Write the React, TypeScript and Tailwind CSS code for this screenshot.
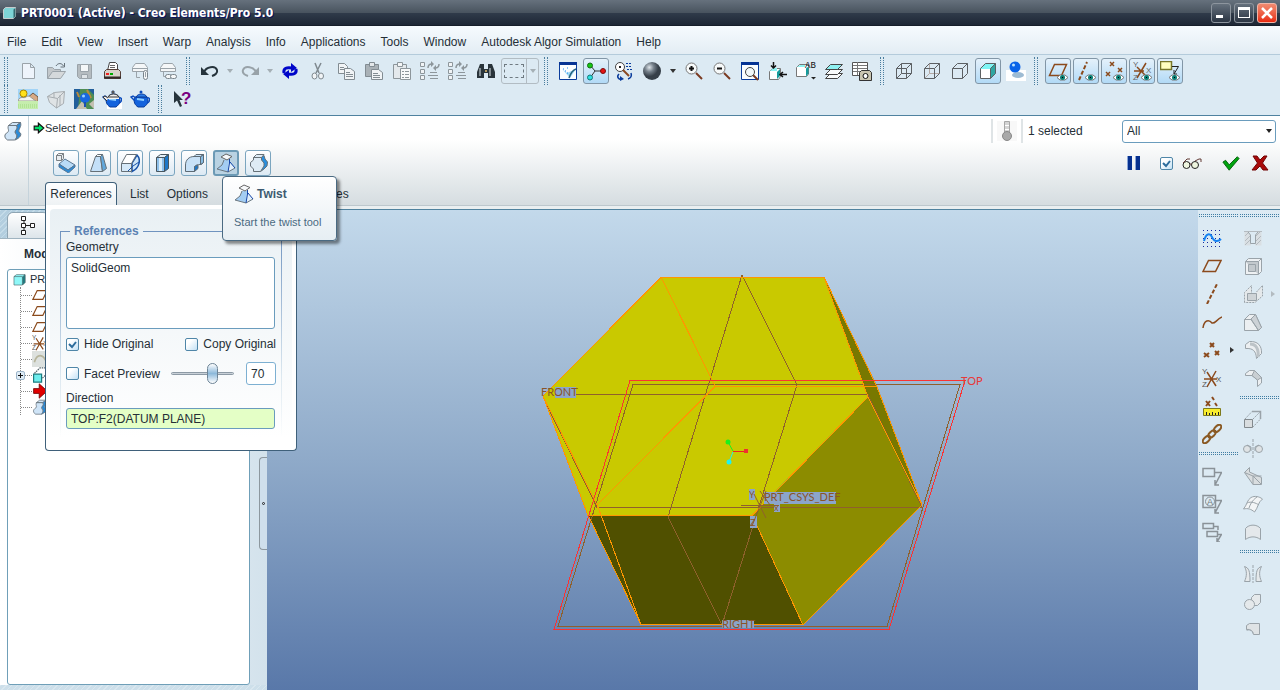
import { useState } from 'react';
import type { ReactNode } from 'react';

const EDGE = '#9aa3a9';
const DARK = '#5c6063';
const BROWN = '#8b4a1c';

const eye = (
    <g>
        <path d="M9 16.5L12 14H17L20 16.5L17 19H12Z" fill="#fff" stroke="#777" />
        <circle cx="14.5" cy="16.5" r="2.5" fill="#087f75" />
        <path d="M14 16h1v1h-1z" fill="#000" />
    </g>
);

const magnifier = (
    <g>
        <path d="M12 12L18 18" stroke="#7a3a20" strokeWidth="2" />
        <circle cx="7.5" cy="7.5" r="5.5" fill="#f7fafa" stroke="#777" />
    </g>
);

const teapot = (
    <g>
        <path d="M5 8C3 13 5 16 8 18H14C18 15 19 12 17 8Z" fill="#1463dd" stroke="#0a3c99" />
        <path d="M5 12L1 8L3 7L6 9M17 9C21 8 20 13 17 14" fill="none" stroke="#0a4bbd" strokeWidth="1.5" />
        <path d="M6 8C8 4 15 4 17 8Z" fill="#2d7eea" stroke="#0a3c99" />
        <circle cx="11" cy="3" r="1.5" fill="#0a4bbd" />
        <path d="M7 10L14 11" stroke="#8fd0ff" strokeWidth="2" />
    </g>
);

const icons: Record<string, ReactNode> = {
    newFile: <path d="M4.5 2.5H12.5L16.5 6.5V17.5H4.5ZM12.5 2.5V6.5H16.5" fill="#eef4fb" stroke={EDGE} />,
    open: (
        <g stroke={EDGE} fill="#c3c8cb">
            <path d="M1.5 17.5V6.5H6.5L8.5 8.5H14.5V11" />
            <path d="M1.5 17.5L6.5 10.5H19.5L14.5 17.5Z" fill="#d5d9db" />
            <path d="M10 5C12 1.5 16 2 17.5 5M18.5 2V6H14.5" fill="none" stroke="#68737b" />
        </g>
    ),
    save: (
        <g stroke={EDGE}>
            <path d="M3.5 3.5H17.5V17.5H5.5L3.5 15.5Z" fill="#b5bcc0" />
            <path d="M6.5 3.5H14.5V10.5H6.5Z" fill="#f4f7f8" />
            <path d="M7.5 13.5H13.5V17.5H7.5Z" fill="#dfe4e7" />
        </g>
    ),
    print: (
        <g>
            <path d="M5.5 9.5L7.5 1.5H13.5L15.5 3.5V9.5Z" fill="#fff" stroke="#444" />
            <path d="M8 4.5H13M8 6.5H13M8 8.5H13" stroke="#666" />
            <path d="M2.5 10.5L4.5 8.5H16.5L18.5 10.5V17.5H2.5Z" fill="#d9d2c8" stroke="#553f38" />
            <path d="M2 16.5H19" stroke="#352a28" strokeWidth="2" />
            <path d="M4 12h3v2h-3z" fill="#e22" />
            <path d="M8 12h3v2h-3z" fill="#0a0" />
        </g>
    ),
    mailFile: (
        <g stroke={EDGE} fill="#f5f7f8">
            <path d="M2.5 10.5V6.5L5.5 2.5H14.5L17.5 6.5V10.5Z" />
            <path d="M2 7.5H17M6.5 10.5V16.5H10" fill="none" />
            <rect x="13.5" y="9.5" width="4" height="9" rx="2" stroke="#78838a" />
            <path d="M15.5 11V16" />
        </g>
    ),
    mailLink: (
        <g stroke={EDGE} fill="#f5f7f8">
            <path d="M2.5 10.5V6.5L5.5 2.5H14.5L17.5 6.5V10.5Z" />
            <path d="M2 7.5H17M5.5 10.5V15.5H8" fill="none" />
            <rect x="7.5" y="13.5" width="6" height="4" rx="2" stroke="#78838a" />
            <rect x="12.5" y="13.5" width="6" height="4" rx="2" stroke="#78838a" />
        </g>
    ),
    undo: (
        <g fill="none" stroke="#26343c" strokeWidth="2">
            <path d="M4 11C6 6 15 4 17 9C18 12 15 14 12 15" />
            <path d="M1 6V14H9Z" fill="#26343c" stroke="none" />
        </g>
    ),
    redo: (
        <g fill="none" stroke="#98a2a8" strokeWidth="2">
            <path d="M16 11C14 6 5 4 3 9C2 12 5 14 8 15" />
            <path d="M19 6V14H11Z" fill="#98a2a8" stroke="none" />
        </g>
    ),
    regenerate: (
        <g fill="none" stroke="#0006c9" strokeWidth="3">
            <path d="M4 12C3 7 7 6 12 7M16 8C17 13 13 14 8 13" />
            <path d="M11 2L17 7L11 11ZM9 9L3 13L9 18Z" fill="#0006c9" stroke="none" />
        </g>
    ),
    cut: (
        <g fill="#f1f4f6" stroke="#7f898f">
            <path d="M7 2L11 12M13 2L8 12" strokeWidth="1.5" />
            <ellipse cx="6.5" cy="15" rx="2.5" ry="3" />
            <ellipse cx="13" cy="15" rx="2.5" ry="3" />
        </g>
    ),
    copy: (
        <g fill="#f1f4f6" stroke="#828c92">
            <path d="M2.5 2.5H8.5L11.5 5.5V12.5H2.5Z" />
            <path d="M4 6.5H8M4 8.5H8" />
            <path d="M8.5 7.5H14.5L18.5 10.5V18.5H8.5Z" />
            <path d="M10 11.5H14M10 13.5H17M10 15.5H17" />
        </g>
    ),
    paste: (
        <g stroke="#828c92">
            <path d="M1.5 3.5H14.5V15.5H1.5Z" fill="#a9b1b6" />
            <path d="M5.5 1.5H10.5V5.5H5.5Z" fill="#e4e8ea" />
            <path d="M7.5 8.5H14.5L18.5 11.5V18.5H7.5Z" fill="#f1f4f6" />
            <path d="M9 12.5H14M9 14.5H16M9 16.5H16" />
        </g>
    ),
    pasteSpecial: (
        <g stroke="#8d969b">
            <path d="M1.5 3.5H14.5V17.5H1.5Z" fill="#e4e9ec" />
            <path d="M5.5 1.5H10.5V5.5H5.5Z" fill="#f4f6f7" />
            <path d="M8.5 7.5H18.5V18.5H8.5Z" fill="#f7f9fa" />
            <path d="M10 10.5H12M10 13.5H12M10 16.5H12M13 10.5H17M13 13.5H17M13 16.5H17" />
        </g>
    ),
    tree: (
        <g stroke="#8d969b" fill="#f1f4f6">
            <path d="M0.5 1.5h4v4h-4zM0.5 8.5h4v4h-4zM0.5 14.5h4v4h-4z" />
            <path d="M8 7C8 4 9 3 12 3M15 7C18 7 19 6 19 3" fill="none" strokeWidth="1.5" />
            <path d="M11 0L14 3L11 6ZM16 4V10L13 7Z" fill="#8d969b" stroke="none" />
            <path d="M10 11.5H17M8 14.5H18M10 17.5H18" />
        </g>
    ),
    binoculars: (
        <g>
            <path d="M4 3H8V8H12V3H16L19 11V17H12V12H8V17H1V11Z" fill="#29343a" />
            <path d="M4 7V15M14 7V15" stroke="#dfe6ea" />
            <path d="M9 9h2v2h-2z" fill="#b59a60" />
        </g>
    ),
    repaint: (
        <g>
            <path d="M1.5 1.5H18.5V18.5H1.5Z" fill="#fbfdff" stroke="#0a3c9c" />
            <path d="M1 2.5H19" stroke="#063394" strokeWidth="3" />
            <path d="M4 8L12 17L18 8L9 12Z" fill="#9ed9f5" />
            <path d="M5 8H6M7 10H8M9 7H10M9 12H10" stroke="#1683f2" />
            <path d="M11 17C13 11 15 9 18 8" fill="none" stroke="#27607c" strokeWidth="1.5" />
        </g>
    ),
    spinCenter: (
        <g>
            <path d="M4 4L9 10H16M9 10L4 17" fill="none" stroke="#333" />
            <circle cx="4" cy="4.5" r="2.5" fill="#13c913" stroke="#176b17" />
            <circle cx="17" cy="10" r="2.5" fill="#e51515" stroke="#7d0e0e" />
            <circle cx="4" cy="16.5" r="2.5" fill="#2ae0e0" stroke="#157878" />
        </g>
    ),
    orientMode: (
        <g>
            <circle cx="6" cy="6" r="4.5" fill="#fff" stroke="#444" />
            <path d="M5 5h2v2h-2z" fill="#222" />
            <path d="M9 9L15 15" stroke="#8c4a22" strokeWidth="2" />
            <path d="M12 2.5H18M12 5.5H18M13 8.5H18" stroke="#0a3c9c" strokeDasharray="2 1" />
            <path d="M5 13C2 16 5 19 8 18M17 12C18 15 17 17 14 18" fill="none" stroke="#0a3c9c" strokeWidth="1.5" />
            <path d="M6 15L10 18L6 20Z" fill="#0a3c9c" />
        </g>
    ),
    sphere: (
        <g>
            <defs>
                <radialGradient id="ball" cx="0.35" cy="0.3">
                    <stop offset="0" stopColor="#dfe5ea" />
                    <stop offset="0.5" stopColor="#75808a" />
                    <stop offset="1" stopColor="#363f48" />
                </radialGradient>
            </defs>
            <circle cx="10" cy="10" r="9" fill="url(#ball)" />
        </g>
    ),
    zoomIn: <g>{magnifier}<path d="M5 7.5H10M7.5 5V10" stroke="#111" strokeWidth="2" /></g>,
    zoomOut: <g>{magnifier}<path d="M5 7.5H10" stroke="#111" strokeWidth="2" /></g>,
    refit: (
        <g>
            <path d="M1.5 1.5H18.5V18.5H1.5Z" fill="#fbfdff" stroke="#0a3c9c" />
            <path d="M1 2.5H19" stroke="#063394" strokeWidth="3" />
            <path d="M13 14L18 19" stroke="#7a3a20" strokeWidth="2" />
            <circle cx="10" cy="11" r="4.5" fill="#f3f8fa" stroke="#444" />
        </g>
    ),
    reorient: (
        <g>
            <path d="M1.5 10.5L4.5 7.5H12.5V15.5L10.5 18.5H1.5Z" fill="#fff" stroke="#777" />
            <path d="M2 10L5 7H9V10Z" fill="#8ef2f2" />
            <path d="M9 11L12 8V15L9 18Z" fill="#159c9c" />
            <path d="M5.5 1V7M3 4.5L5.5 7L8 4.5M19 13.5H12M15 11L12 13.5L15 16" fill="none" stroke="#111" strokeWidth="1.5" />
        </g>
    ),
    savedViews: (
        <g>
            <path d="M0.5 6.5L3.5 3.5H12.5V13L10.5 15.5H0.5Z" fill="#fff" stroke="#777" />
            <path d="M1 6L4 4H9V6Z" fill="#8ef2f2" />
            <path d="M10 7.5L12.5 5.5V12.5L10 15.5Z" fill="#159c9c" />
            <text x="9" y="7" fontSize="9" fill="#111" fontFamily="Liberation Mono, monospace">AB</text>
            <path d="M15 16H20L17.5 18.5Z" fill="#222" />
        </g>
    ),
    layers: (
        <g stroke="#444">
            <path d="M1.5 17.5L6.5 12.5H18.5L13.5 17.5Z" fill="#f8fafa" />
            <path d="M1.5 13.5L6.5 8.5H18.5L13.5 13.5Z" fill="#f8fafa" />
            <path d="M1.5 8.5L6.5 3.5H18.5L13.5 8.5Z" fill="#8ef0f0" />
        </g>
    ),
    viewManager: (
        <g>
            <path d="M0.5 1.5H15.5V14.5H0.5Z" fill="#fff" stroke="#555" />
            <path d="M1 4.5H15M1 7.5H15M1 10.5H15M5.5 1V14" stroke="#777" />
            <path d="M7.5 11.5L9.5 9.5H17.5L19.5 11.5V19.5H7.5Z" fill="#c9c4b0" stroke="#333" />
            <circle cx="13.5" cy="15" r="2.5" fill="#fff" stroke="#111" />
        </g>
    ),
    wireframe: (
        <g fill="none" stroke={DARK}>
            <path d="M2.5 7.5H12.5V17.5H2.5ZM7.5 2.5H17.5V12.5H7.5ZM2.5 7.5L7.5 2.5M12.5 7.5L17.5 2.5M12.5 17.5L17.5 12.5M2.5 17.5L7.5 12.5" />
        </g>
    ),
    hiddenLine: (
        <g fill="none" stroke="#b3a9a5">
            <path d="M7.5 2.5V12.5H17.5M2.5 17.5L7.5 12.5" />
            <path d="M2.5 7.5H12.5V17.5H2.5ZM2.5 7.5L7.5 2.5H17.5V12.5L12.5 17.5M12.5 7.5L17.5 2.5" stroke={DARK} />
        </g>
    ),
    noHidden: <path d="M2.5 7.5H12.5V17.5H2.5ZM2.5 7.5L7.5 2.5H17.5V12.5L12.5 17.5M12.5 7.5L17.5 2.5" fill="none" stroke={DARK} />,
    shading: (
        <g stroke={DARK}>
            <path d="M2.5 7.5H12.5V17.5H2.5Z" fill="#fff" stroke="#fff" />
            <path d="M2.5 7.5L7.5 2.5H17.5L12.5 7.5Z" fill="#7ff5f5" stroke="#7ff5f5" />
            <path d="M12.5 7.5L17.5 2.5V12.5L12.5 17.5Z" fill="#2fa6a2" />
            <path d="M2.5 7.5L7.5 2.5H17.5M2.5 7.5V17.5H12.5" fill="none" />
        </g>
    ),
    enhanced: (
        <g>
            <path d="M0 9H20V20H0Z" fill="#fff" />
            <ellipse cx="12" cy="14" rx="6" ry="3" fill="#9dbbd3" />
            <circle cx="9" cy="6" r="5.5" fill="#0a63e8" />
            <circle cx="7.5" cy="4" r="1.5" fill="#b9e2ff" />
        </g>
    ),
    planeDisplay: <g><path d="M1.5 14.5L6.5 3.5H18.5L13.5 14.5Z" fill="none" stroke={BROWN} strokeWidth="1.5" />{eye}</g>,
    axisDisplay: <g><path d="M3 19L11 1" stroke={BROWN} strokeWidth="2" strokeDasharray="4 2" />{eye}</g>,
    pointDisplay: <g><path d="M6 1L10 5M10 1L6 5M14 7L18 11M18 7L14 11M2 11L6 15M6 11L2 15" stroke={BROWN} strokeWidth="1.5" />{eye}</g>,
    csysDisplay: (
        <g>
            <path d="M2 10H12M5 17L14 2M5 6L13 14" stroke={BROWN} strokeWidth="1.5" />
            <g fill="#666" fontSize="8">
                <text x="1" y="6">Y</text>
                <text x="14" y="12">X</text>
                <text x="1" y="19">Z</text>
            </g>
            {eye}
        </g>
    ),
    noteDisplay: (
        <g>
            <path d="M0.5 0.5H11.5V8.5H0.5Z" fill="#ffffc0" stroke="#77772a" strokeWidth="1.5" />
            <path d="M12 5.5H18.5L14 13M14 9V13H17" fill="none" stroke="#222" />
            {eye}
        </g>
    ),
    landscape: (
        <g>
            <path d="M0 0H20V20H0Z" fill="#a2d4f7" />
            <path d="M8 10L15 4L20 8V14H8Z" fill="#d8a983" stroke="#6d5a49" />
            <path d="M0 12C2 6 6 10 8 8C11 5 14 10 18 12Z" fill="#f3f4ef" stroke="#9a9a90" />
            <circle cx="5.5" cy="4.5" r="3.5" fill="#ffe11a" stroke="#aa8500" />
            <path d="M0 12H20V20H0Z" fill="#c6edae" />
            <path d="M0 16H20M0 18H20" stroke="#9ddb7c" strokeDasharray="1 1" />
        </g>
    ),
    perspective: (
        <g stroke="#a7adb1">
            <path d="M1.5 7.5L8.5 3.5L18.5 2.5L17.5 14.5L10.5 19L3.5 13.5Z" fill="#dfe3e5" />
            <path d="M1.5 7.5L11.5 9.5L10.5 19M11.5 9.5L18.5 2.5M8 3V9M14 6V17" fill="none" />
        </g>
    ),
    photo: (
        <g>
            <path d="M0 0H20V20H0Z" fill="#4c8d55" />
            <path d="M0 0H6L4 20H0ZM14 0H20V6Z" fill="#225f9b" />
            <path d="M2 20L8 12L13 20ZM20 20V11L15 15Z" fill="#c3c0b1" />
            <path d="M13 1L17 9M3 3L5 8" stroke="#b98b3c" strokeWidth="2" />
            <circle cx="11" cy="9" r="5" fill="#1868e0" />
            <path d="M10 13H12V18H10Z" fill="#1c50b5" />
            <circle cx="9.5" cy="7" r="1.5" fill="#9ad0ff" />
        </g>
    ),
    teapotHalf: (
        <g>
            <path d="M5 12H20V20H5Z" fill="#fff" />
            {teapot}
            <path d="M5 7H17V10H5Z" fill="#f3f3f3" />
            <path d="M6 8C8 4 15 4 17 8Z" fill="#eee" stroke="#333" />
            <path d="M5 12L1 8L3 7L6 9" fill="#eee" stroke="#333" />
            <circle cx="11" cy="3" r="1.5" fill="#555" />
        </g>
    ),
    teapot,
    whatsThis: (
        <g>
            <path d="M2 2V14L5 11.5L8 18L10 17L7.5 11H11Z" fill="#26343c" />
            <text x="9" y="15" fontSize="17" fontWeight="bold" fill="#7a0080">?</text>
        </g>
    ),
    warp: (
        <g stroke="#6c7780">
            <path d="M5.5 4.5L9.5 1.5H17.5L13.5 4.5ZM5.5 4.5H13.5C16 9 11 9 12.5 12.5C15 15 13 19 11.5 19H4.5C1 17 1 13 4.5 11.5C7 9 4 8 5.5 4.5Z" fill="#cfe4f7" />
            <path d="M13.5 4.5L17.5 1.5C19 6 15 8 16 11C20 13 17 17 12 19C14 16 15 14 12.5 12C11 9 16 8 13.5 4.5Z" fill="#2a8bd9" />
        </g>
    ),
    transform: (
        <g stroke="#5a7793">
            <path d="M0.5 2.5L2.5 0.5H7.5V5.5L5.5 7.5H0.5Z" fill="#e9edf0" stroke="#7a8084" />
            <path d="M0.5 2.5H5.5V7.5M5.5 2.5L7.5 0.5" fill="none" stroke="#7a8084" />
            <path d="M3 11L9 6L19 12L12 17Z" fill="#b8dbf8" />
            <path d="M3 11L12 17L19 12V14L12.5 20L3 14Z" fill="#2a8bd9" />
        </g>
    ),
    taper: (
        <g stroke="#667077">
            <path d="M7.5 3.5L9.5 1.5H14.5L12.5 3.5Z" fill="#f8fafb" />
            <path d="M7.5 3.5H12.5L14.5 18.5H2.5Z" fill="#c4e0f8" />
            <path d="M12.5 3.5L14.5 1.5L18.5 15.5L14.5 18.5Z" fill="#62a8dc" />
        </g>
    ),
    stretch: (
        <g stroke="#667077">
            <path d="M12 10L17 2C21 6 20 15 12 18.5Z" fill="#cfe6f8" stroke="#1852a8" strokeWidth="1.5" />
            <path d="M1.5 10.5L6.5 1.5H16.5L11.5 10.5Z" fill="#fff" />
            <path d="M1.5 10.5H11.5V18.5H1.5Z" fill="#d6e9f8" />
            <path d="M8 18L13 13L19 9" fill="none" stroke="#1852a8" />
        </g>
    ),
    bendBox: (
        <g stroke="#48565f">
            <path d="M4.5 4.5L8.5 1.5H16.5L12.5 4.5Z" fill="#e5f0f8" />
            <path d="M4.5 4.5H12.5V18.5H4.5Z" fill="#8fc0ea" />
            <path d="M12.5 4.5L16.5 1.5V15.5L12.5 18.5Z" fill="#1d77c8" />
            <path d="M8.5 5V18" stroke="#d8edfb" strokeWidth="3" />
        </g>
    ),
    bend: (
        <g stroke="#5d6b75">
            <path d="M1.5 18.5V12C1.5 7 5 3.5 10 3.5L12 1.5H19.5V9.5L17.5 11.5C13 11.5 11.5 12 10.5 14V18.5Z" fill="#c7e1f7" />
            <path d="M10 3.5H16.5V11.5M16.5 3.5L19.5 1.5" fill="none" />
            <path d="M16.5 4L19.5 1.5V9.5L16.5 11.5Z" fill="#86bbe3" />
            <path d="M10.5 18.5V13.5L14 12V15.5Z" fill="#1d77c8" />
        </g>
    ),
    twist: (
        <g>
            <path d="M1 16L6 12L8 7H13L15 11L19 15L12 19Z" fill="#a3cdf3" />
            <path d="M13 8L15 11L19 15L12 19Z" fill="#e3f0fa" />
            <path d="M8 7L6 12L1 16L12 19L19 15" fill="none" stroke="#6b7780" />
            <path d="M13.5 6V10L12 19M14 9L19 15" fill="none" stroke="#1445a8" />
            <path d="M5 4L10 1L16 3.5L11 7Z" fill="#f6f8fa" stroke="#666" />
        </g>
    ),
    sculpt: (
        <g stroke="#667077">
            <path d="M13 4.5L16 2.5L17 6L19.5 9L19 13L16 16L12.5 18.5L15 12Z" fill="#278fe0" />
            <path d="M5.5 4.5L8.5 1.5H16L13.5 4.5ZM5.5 4.5H13.5V7L16 10V13L12.5 18.5H5.5V16L2.5 13V9.5L5.5 7Z" fill="#deebf5" />
        </g>
    ),
    glasses: (
        <g fill="#eef5df" stroke="#222">
            <circle cx="4.5" cy="12" r="3.5" />
            <circle cx="13" cy="12" r="3.5" />
            <path d="M1 10L5 6H8M13 8L17 6H19V9M8 11H10" fill="none" stroke="#633a34" />
        </g>
    ),
    ok: <path d="M1 9L4 7L8 12L17 3L19 5L8 18Z" fill="#00a50f" stroke="#04590b" />,
    cancel: <path d="M3 3H7L10 7L14 3H17L12.5 10L18 17H13L10 13L6 17H2L7.5 10Z" fill="#a90a0a" stroke="#710505" />,
    thermo: (
        <g>
            <path d="M0 0H20V20H0Z" fill="#f8f8f8" />
            <path d="M7.5 0.5H12.5V12H7.5Z" fill="#d4d4d4" stroke="#a6a6a6" />
            <path d="M8 4.5H12M8 8.5H12" stroke="#fff" />
            <circle cx="10" cy="15" r="4.5" fill="#a9a9a9" stroke="#888" />
        </g>
    ),
    sketch: (
        <g>
            <path d="M1 2.5H19M1 6.5H19M1 10.5H19M1 14.5H19M1 18.5H19" stroke="#172a9e" strokeDasharray="1 3" />
            <path d="M2 13C4 5 8 5 10 9C12 14 16 14 19 11" fill="none" stroke="#1683f2" strokeWidth="2" />
        </g>
    ),
    plane: <path d="M1 15.5L6.5 4.5H19L13.5 15.5Z" fill="none" stroke={BROWN} strokeWidth="1.5" />,
    axis: <path d="M5 20L15 0" stroke={BROWN} strokeWidth="2" strokeDasharray="4 2" />,
    curve: <path d="M1 16C2 8 7 7 10 11C13 12 14 8 20 5" fill="none" stroke={BROWN} strokeWidth="1.5" />,
    points: <path d="M8 3L12 7M12 3L8 7M13 11L17 15M17 11L13 15M2 13L7 17M7 13L2 17" stroke={BROWN} strokeWidth="2" />,
    csys: (
        <g>
            <path d="M2 11H15M5 19L14 3M5 4L14 18" stroke={BROWN} strokeWidth="1.5" />
            <g fill="#555" fontSize="8">
                <text x="0" y="6">Y</text>
                <text x="14" y="14">X</text>
                <text x="0" y="19">Z</text>
            </g>
        </g>
    ),
    analysisFeature: (
        <g>
            <path d="M10 1L12 4M4 5L8 10M8 5L4 10M13 7L15 10" stroke={BROWN} strokeWidth="2" />
            <path d="M1.5 12.5H18.5V19.5H1.5Z" fill="#f7ec2e" stroke="#7d7a1d" />
            <path d="M4.5 19V16M7.5 19V17M10.5 19V16M13.5 19V17M16.5 19V16" stroke="#222" />
        </g>
    ),
    chain: (
        <g fill="none" stroke="#8a5a24" strokeWidth="2">
            <ellipse cx="4.5" cy="15.5" rx="4.5" ry="2.5" transform="rotate(-45 4.5 15.5)" />
            <ellipse cx="10" cy="10" rx="4.5" ry="2.5" transform="rotate(-45 10 10)" />
            <ellipse cx="15.5" cy="4.5" rx="4.5" ry="2.5" transform="rotate(-45 15.5 4.5)" />
        </g>
    ),
    note: <path d="M1 2.5H12.5V10.5H1ZM13 6.5H19.5L13 19M13 14V19H17" fill="none" stroke="#8a9298" strokeWidth="1.5" />,
    symbol: (
        <g fill="none" stroke="#8a9298">
            <path d="M1 1.5H13.5V13.5H1ZM14 6.5H19.5L13 19M13 15V19H17" strokeWidth="1.5" />
            <circle cx="8" cy="7.5" r="4.5" />
            <text x="5" y="11" fontSize="9" fill="#727b80" stroke="none">A</text>
        </g>
    ),
    notes: <path d="M1 1.5H11.5V6.5H1ZM5 9.5H15.5V14.5H5ZM12 4.5H16V8M16 12.5H19.5L15 20M15 16V20H18" fill="none" stroke="#8a9298" strokeWidth="1.5" />,
    hole: (
        <g stroke="#b4bbc0">
            <path d="M1.5 3.5H5L8 7.5V17.5H1.5ZM18.5 3.5H15L12 7.5V17.5H18.5Z" fill="#d9dfe3" stroke="none" />
            <path d="M1 3.5H19M2 8L6 4M2 13L7 8M2 17L7 12M13 8L17 4M13 13L18 8M13 17L18 12" fill="none" />
            <path d="M5 4L7.5 7V15.5H12.5V7L15 4" fill="none" stroke={EDGE} />
        </g>
    ),
    shell: (
        <g stroke={EDGE}>
            <path d="M2.5 5.5L5.5 2.5H18.5V15.5L15.5 18.5H2.5Z" fill="#eef1f3" />
            <path d="M2.5 5.5H15.5V18.5M15.5 5.5L18.5 2.5M5.5 8.5H12.5V15.5H5.5Z" fill="#c3c9cd" />
        </g>
    ),
    rib: (
        <g stroke={EDGE} fill="#e5e9eb">
            <path d="M1.5 18.5V8.5L8.5 1.5V9.5M13.5 8L19.5 1.5V12L12 18.5H1.5" strokeDasharray="2 1" />
            <path d="M4.5 9.5H13.5V16.5H4.5Z" fill="#cfd4d7" />
        </g>
    ),
    draft: (
        <g stroke={EDGE} fill="#eceff1">
            <path d="M1.5 7.5L6.5 2.5H12.5L18.5 15.5L15.5 18.5H1.5Z" />
            <path d="M8 7L12.5 2.5L18.5 15.5L15.5 18.5Z" fill="#cdd2d6" />
            <path d="M1.5 7.5H8L15.5 18.5" fill="none" />
        </g>
    ),
    round: (
        <g stroke={EDGE} fill="#eceff1">
            <path d="M2.5 4.5L6.5 1.5C15 1 19 6 18.5 13.5L13.5 18.5C13 11 10 8 2.5 8.5Z" />
            <path d="M7 4C13 4 16 9 15 17" fill="none" stroke="#bcc3c7" strokeWidth="3" />
        </g>
    ),
    chamfer: (
        <g stroke={EDGE} fill="#eceff1">
            <path d="M2.5 5.5L6.5 2.5H11.5L18.5 9.5V15L14.5 18.5V12L9 7.5H2.5Z" />
            <path d="M9 7.5L11.5 2.5L18.5 9.5L14.5 12Z" fill="#c9cfd3" />
        </g>
    ),
    extrude: (
        <g stroke={EDGE} fill="#d9dddf">
            <path d="M1.5 9.5H9.5V17.5H1.5Z" stroke="#82898d" />
            <path d="M2 9L9 1.5H17.5V9L10 17M10 9L17 2" fill="none" strokeDasharray="2 1" />
            <path d="M9 1.5H17.5V9" fill="none" strokeWidth="1.5" />
        </g>
    ),
    revolve: (
        <g stroke={EDGE} fill="#dfe3e5">
            <circle cx="4" cy="11" r="3.5" />
            <circle cx="16" cy="11" r="3.5" />
            <path d="M10 1V20" strokeDasharray="3 1" />
            <path d="M4 7L8 9V13M16 7L12 9V13" fill="none" />
        </g>
    ),
    sweep: (
        <g stroke={EDGE} fill="#d9dddf">
            <path d="M1.5 6.5L6.5 1.5V6L18.5 11.5V18.5H10L1.5 6.5Z" />
            <path d="M10 10H18.5M10 10V18.5M1.5 6.5L10 10L18 18" fill="none" />
        </g>
    ),
    boundary: (
        <g stroke={EDGE} fill="#f3f5f6">
            <path d="M0.5 15C4 11 4 6 8 3.5C12 1.5 16 2.5 19.5 5C15 8 15 14 11.5 18C8 15 5 14 0.5 15Z" />
            <path d="M4 9C8 7 13 9 16 11M6 14C8 8 11 5 14 3" fill="none" />
        </g>
    ),
    style: <path d="M2.5 17.5V6.5C6 2 14 2 17.5 6.5V17.5C13 14 7 14 2.5 17.5Z" fill="#e4e8eb" stroke={EDGE} />,
    mirror: (
        <g stroke={EDGE} fill="#e5e9eb">
            <path d="M10 1V19" strokeDasharray="3 1" />
            <path d="M1.5 2.5C6 4 7 7 7 17.5H1.5C4 12 4 7 1.5 2.5ZM18.5 2.5C14 4 13 7 13 17.5H18.5C16 12 16 7 18.5 2.5Z" />
        </g>
    ),
    merge: (
        <g stroke={EDGE} fill="#e5e9eb">
            <path d="M8.5 5.5L11.5 2.5H17.5V10.5L14.5 13.5H8.5Z" />
            <circle cx="6.5" cy="12.5" r="5" />
        </g>
    ),
    trim: (
        <g stroke={EDGE} fill="#dfe3e5">
            <path d="M3.5 5.5L6.5 3.5H16.5V14.5H10.5C10 11 8 9 3.5 9.5Z" />
            <path d="M3.5 10C8 10 9.5 11 10 14.5" fill="none" strokeDasharray="2 1" />
        </g>
    ),
    part: (
        <g stroke="#4b6b70">
            <path d="M1.5 5.5L5.5 2.5H18.5V14.5L14.5 18.5H1.5Z" fill="#8ff7f7" />
            <path d="M14.5 6L18.5 2.5V14.5L14.5 18.5Z" fill="#1d7c80" />
            <path d="M1.5 5.5H14.5" fill="none" />
        </g>
    ),
    spline: (
        <g>
            <path d="M0 0H20V20H0Z" fill="#dde1de" />
            <path d="M3 14C6 3 14 3 18 14" fill="none" stroke="#b7b59c" strokeWidth="2" />
        </g>
    ),
    protrusion: (
        <g>
            <path d="M2 9H12V19H2Z" fill="#6eeded" stroke="#1d7c80" strokeWidth="1.5" />
            <path d="M3 8L10 1H19M13 14L19 8" fill="none" stroke="#56656b" strokeDasharray="2 1" strokeWidth="1.5" />
        </g>
    ),
    insertHere: <path d="M2 7H9V1L19 10L9 19V13H2Z" fill="#e10000" stroke="#6c0000" />,
    goArrow: <path d="M2 7H9V2L18 10L9 18V13H2Z" fill="#00e06a" stroke="#111" strokeWidth="2" />,
};

interface IconProps {
    name: string;
    className?: string;
}

const Icon = ({ name, className = 'size-5' }: IconProps) => (
    <svg viewBox="0 0 20 20" className={`shrink-0 ${className}`} aria-hidden="true">{icons[name]}</svg>
);

const ToolButton = ({ name, pressed }: { name: string; pressed?: boolean }) => (
    <button type="button" aria-label={name} aria-pressed={pressed} className="flex size-7 shrink-0 items-center justify-center">
        <span className={pressed
            ? 'flex size-[26px] items-center justify-center rounded-[3px] border border-[#8296a6] bg-linear-to-b from-[#e4f1fb] to-[#b2daf6]'
            : 'flex size-[26px] items-center justify-center'}>
            <Icon name={name} />
        </span>
    </button>
);

const Arrow = ({ className = '' }: { className?: string }) => (
    <svg viewBox="0 0 6 4" className={`h-1 w-1.5 shrink-0 ${className}`} aria-hidden="true">
        <path d="M0 0H6L3 4Z" fill="currentColor" />
    </svg>
);

const Grip = () => <span className="mr-1.5 ml-1 h-7 w-1 shrink-0 border-x border-dotted border-[#4a7d9e]" />;

const RowGrip = () => <span className="mx-px mt-1 mb-[7px] h-[3px] border-y border-dotted border-[#3f7da3]" />;

const CheckBox = ({ label, initial, hideLabel }: { label: string; initial?: boolean; hideLabel?: boolean }) => {
    const [checked, setChecked] = useState(Boolean(initial));

    return (
        <label className="flex items-center gap-[5px]">
            <span className="grid size-[13px] shrink-0">
                <input
                    type="checkbox"
                    checked={checked}
                    aria-label={label}
                    onChange={(e) => setChecked(e.target.checked)}
                    className="col-start-1 row-start-1 size-[13px] appearance-none rounded-xs border border-[#4f86a8] bg-linear-to-br from-white from-30% to-[#c3e1f5]"
                />
                {checked && (
                    <svg viewBox="0 0 13 13" className="pointer-events-none col-start-1 row-start-1 size-[13px]">
                        <path d="M3 6L6 9L10 4" fill="none" stroke="#2c6c9c" strokeWidth="2" />
                    </svg>
                )}
            </span>
            {!hideLabel && <span>{label}</span>}
        </label>
    );
};

const menus = ['File', 'Edit', 'View', 'Insert', 'Warp', 'Analysis', 'Info', 'Applications', 'Tools', 'Window', 'Autodesk Algor Simulation', 'Help'];

const TitleBar = () => (
    <header className="flex h-[26px] items-center border-b border-[#161e2a] bg-[linear-gradient(#66717d,#49545f_50%,#303b4a_52%,#1e2735)] px-[3px]">
        <svg viewBox="0 0 13 12" className="h-3 w-[13px]">
            <path d="M0.5 2.5L2.5 0.5H12.5V9L10.5 11.5H0.5Z" fill="#7dd3d6" stroke="#c5cbcd" />
            <path d="M10.5 2.5V11.5L12.5 9V1Z" fill="#33676e" />
        </svg>
        <h1 className="ml-[5px] flex-1 font-['DejaVu_Sans_Condensed','DejaVu_Sans',sans-serif] text-xs font-bold text-white [text-shadow:1px_1px_0_#0a1260]">
            PRT0001 (Active) - Creo Elements/Pro 5.0
        </h1>
        <div className="flex gap-[3px]">
            <button type="button" aria-label="Minimize" className="flex size-5 items-end justify-center rounded-[3px] border border-[#8d959e] bg-linear-to-b from-[#66717d] to-[#2c3644] pb-1">
                <span className="mr-1 h-[3px] w-[7px] bg-white" />
            </button>
            <button type="button" aria-label="Maximize" className="flex size-5 items-center justify-center rounded-[3px] border border-[#8d959e] bg-linear-to-b from-[#66717d] to-[#2c3644]">
                <span className="h-[11px] w-3 border border-t-3 border-white" />
            </button>
            <button type="button" aria-label="Close" className="flex size-5 items-center justify-center rounded-[3px] border border-[#f0b5a8] bg-linear-to-b from-[#f08a70] to-[#e8260a]">
                <svg viewBox="0 0 12 12" className="size-3"><path d="M1 1L11 11M11 1L1 11" stroke="#fff" strokeWidth="2.5" /></svg>
            </button>
        </div>
    </header>
);

const Toolbars = () => (
    <div className="border-b border-[#4f829f] bg-[#dceaf3] py-0.5">
        <div className="flex h-7 items-center">
            <Grip />
            {['newFile', 'open', 'save', 'print', 'mailFile', 'mailLink'].map((n) => <ToolButton key={n} name={n} />)}
            <Grip />
            <ToolButton name="undo" />
            <span className="flex w-3 justify-center text-[#a5afb5]"><Arrow /></span>
            <ToolButton name="redo" />
            <span className="flex w-3 justify-center text-[#a5afb5]"><Arrow /></span>
            {['regenerate', 'cut', 'copy', 'paste', 'pasteSpecial', 'tree', 'tree', 'binoculars'].map((n, i) => <ToolButton key={i} name={n} />)}
            <button type="button" aria-label="Select box" className="mx-px flex h-[26px] w-[38px] shrink-0 rounded-[3px] border border-[#b2bcc3] text-[#a5afb5]">
                <span className="flex w-[25px] items-center justify-center self-stretch border-r border-[#b2bcc3]">
                    <span className="h-3.5 w-5 border border-dashed border-[#6f7a81]" />
                </span>
                <span className="flex flex-1 items-center justify-center self-stretch"><Arrow /></span>
            </button>
            <Grip />
            <ToolButton name="repaint" />
            <ToolButton name="spinCenter" pressed />
            <ToolButton name="orientMode" />
            <ToolButton name="sphere" />
            <span className="flex w-3.5 justify-center text-[#333]"><Arrow /></span>
            {['zoomIn', 'zoomOut', 'refit', 'reorient', 'savedViews', 'layers', 'viewManager'].map((n) => <ToolButton key={n} name={n} />)}
            <Grip />
            {['wireframe', 'hiddenLine', 'noHidden'].map((n) => <ToolButton key={n} name={n} />)}
            <ToolButton name="shading" pressed />
            <ToolButton name="enhanced" />
            <Grip />
            {['planeDisplay', 'axisDisplay', 'pointDisplay', 'csysDisplay', 'noteDisplay'].map((n) => <ToolButton key={n} name={n} pressed />)}
        </div>
        <div className="flex h-7 items-center">
            <Grip />
            {['landscape', 'perspective', 'photo', 'teapotHalf', 'teapot'].map((n) => <ToolButton key={n} name={n} />)}
            <Grip />
            <ToolButton name="whatsThis" />
        </div>
    </div>
);

const Tooltip = () => (
    <div role="tooltip" className="absolute top-full left-[9px] z-30 h-[65px] w-[115px] rounded-sm border border-[#4a6a82] bg-linear-to-b from-white to-[#e6eef3] px-[11px] pt-[7px] shadow-[3px_3px_3px_rgba(0,0,0,0.45)]">
        <div className="flex items-center gap-[3px] text-xs font-bold text-[#3d5a70]">
            <Icon name="twist" />
            Twist
        </div>
        <p className="mt-2.5 text-[11px] leading-4 whitespace-nowrap text-[#4a6a82]">Start the twist tool</p>
    </div>
);

const ReferencesPanel = () => {
    const [preview, setPreview] = useState(70);

    return (
        <div className="absolute top-full left-0 z-20 w-[252px] rounded-b-sm border border-t-0 border-[#3f607a] bg-white px-1 pt-1 pb-3">
            <div className="rounded-t-sm bg-linear-to-b from-[#e9f0f4] to-white px-2.5 pt-[14px]">
                <fieldset className="h-[215px] border border-[#6f93bf] px-[5px] [border-image:linear-gradient(to_bottom,#6f93bf,#dce8f0_70%,transparent)_1]">
                    <legend className="ml-1 px-1 text-xs leading-4 font-bold text-[#5b82b3]">References</legend>
                    <label htmlFor="geometry" className="block leading-4">Geometry</label>
                    <textarea
                        id="geometry"
                        readOnly
                        defaultValue="SolidGeom"
                        className="mt-0.5 block h-[72px] w-[209px] resize-none rounded-[3px] border border-[#6a9cbd] bg-white px-1 py-0.5 leading-4"
                    />
                    <div className="mt-[7px] flex h-4 items-center justify-between">
                        <CheckBox label="Hide Original" initial />
                        <CheckBox label="Copy Original" />
                    </div>
                    <div className="mt-2.5 flex h-[23px] items-center">
                        <CheckBox label="Facet Preview" />
                        <input
                            type="range"
                            aria-label="Preview quality"
                            value={preview}
                            onChange={(e) => setPreview(Number(e.target.value))}
                            className="mr-3 ml-auto h-[21px] w-[63px] appearance-none bg-transparent [&::-webkit-slider-runnable-track]:h-[3px] [&::-webkit-slider-runnable-track]:rounded-full [&::-webkit-slider-runnable-track]:border [&::-webkit-slider-runnable-track]:border-[#8d9aa5] [&::-webkit-slider-runnable-track]:bg-[#c9d1d8] [&::-webkit-slider-thumb]:-mt-[10px] [&::-webkit-slider-thumb]:h-[21px] [&::-webkit-slider-thumb]:w-[11px] [&::-webkit-slider-thumb]:appearance-none [&::-webkit-slider-thumb]:rounded-full [&::-webkit-slider-thumb]:border [&::-webkit-slider-thumb]:border-[#6d8496] [&::-webkit-slider-thumb]:bg-linear-to-b [&::-webkit-slider-thumb]:from-white [&::-webkit-slider-thumb]:via-[#8db9da] [&::-webkit-slider-thumb]:to-white"
                        />
                        <input
                            aria-label="Preview value"
                            value={preview}
                            onChange={(e) => setPreview(Number(e.target.value) || 0)}
                            className="h-[23px] w-[30px] rounded-[3px] border border-[#7db0d2] bg-white px-1"
                        />
                    </div>
                    <label htmlFor="direction" className="mt-[5px] block leading-4">Direction</label>
                    <input
                        id="direction"
                        readOnly
                        value="TOP:F2(DATUM PLANE)"
                        className="mt-0.5 block h-[21px] w-[209px] rounded-[3px] border border-[#6a9cbd] bg-[#e4ffc6] px-1"
                    />
                </fieldset>
            </div>
        </div>
    );
};

const Dashboard = () => (
    <section className="relative z-10 bg-linear-to-b from-white from-25% to-[#d2dade]">
        <div className="flex h-[89px]">
            <div className="flex w-[29px] shrink-0 justify-center border-r border-[#c5d3db] pt-[5px] pr-0.5">
                <Icon name="warp" />
            </div>
            <div className="flex flex-1 flex-col">
                <div className="flex h-6 items-center pl-1 text-[11px]">
                    <Icon name="goArrow" className="size-3" />
                    Select Deformation Tool
                </div>
                <div className="mt-2.5 flex gap-1.5 pl-6">
                    {['transform', 'taper', 'stretch', 'bendBox', 'bend', 'twist', 'sculpt'].map((n) => (
                        <div key={n} className="relative">
                            <button
                                type="button"
                                aria-label={n}
                                className={n === 'twist'
                                    ? 'flex size-[26px] items-center justify-center rounded-[3px] border-2 border-[#6c9ab5] bg-[#b9d2e2]'
                                    : 'flex size-[26px] items-center justify-center rounded-[3px] border border-[#7ba5bf] bg-linear-to-b from-white to-[#dce9f3]'}
                            >
                                <Icon name={n} />
                            </button>
                            {n === 'twist' && <Tooltip />}
                        </div>
                    ))}
                </div>
                <div className="relative mt-auto ml-4 flex h-[23px] items-center">
                    <button type="button" className="relative z-30 h-full w-[72px] rounded-t-sm border border-b-0 border-[#3f607a] bg-linear-to-b from-white to-[#eef2f4]">References</button>
                    <div className="ml-[13px] flex gap-[18px]">
                        <button type="button">List</button>
                        <button type="button">Options</button>
                        <button type="button" aria-label="Marquee" className="w-[50px]" />
                        <button type="button">Properties</button>
                    </div>
                    <ReferencesPanel />
                </div>
            </div>
            <div className="flex w-[289px] shrink-0 flex-col">
                <div className="flex items-center pt-[3px] pr-1">
                    <span className="flex h-6 w-8 items-center justify-center border-x-2 border-[#dfe4e6]"><Icon name="thermo" /></span>
                    <span className="ml-[5px] flex-1">1 selected</span>
                    <div className="relative">
                        <select aria-label="Selection filter" className="block h-[23px] w-[154px] appearance-none rounded-[3px] border border-[#6a9cbd] bg-white px-1">
                            <option>All</option>
                        </select>
                        <span className="pointer-events-none absolute top-0 right-1 flex h-full items-center"><Arrow className="text-[#222]" /></span>
                    </div>
                </div>
                <div className="mt-2.5 flex h-5 items-center justify-end pr-2.5">
                    <button type="button" aria-label="Pause" className="mr-5 flex gap-[3px]">
                        <span className="h-3.5 w-[5px] border-l border-[#89a5d8] bg-[#06308f]" />
                        <span className="h-3.5 w-[5px] border-l border-[#89a5d8] bg-[#06308f]" />
                    </button>
                    <CheckBox label="Preview" initial hideLabel />
                    <button type="button" aria-label="Glasses" className="ml-[9px]"><Icon name="glasses" /></button>
                    <button type="button" aria-label="Apply" className="ml-5"><Icon name="ok" className="size-[18px]" /></button>
                    <button type="button" aria-label="Cancel" className="ml-2.5"><Icon name="cancel" /></button>
                </div>
            </div>
        </div>
        <div className="h-[5px] border-t border-b border-t-[#bcc7cd] border-b-[#4f829f] bg-[#e9eef0]" />
    </section>
);

const treeItems = [
    { icon: 'plane', label: 'RIGHT' },
    { icon: 'plane', label: 'TOP' },
    { icon: 'plane', label: 'FRONT' },
    { icon: 'csys', label: 'PRT_CSYS_DEF' },
    { icon: 'spline', label: 'Sketch 1' },
    { icon: 'protrusion', label: 'Extrude 1', expandable: true },
    { icon: 'insertHere', label: 'Insert Here' },
    { icon: 'warp', label: 'Warp 1' },
];

const ModelTree = () => (
    <aside className="flex w-[267px] shrink-0 bg-[repeating-linear-gradient(135deg,#d9e7ef_0_1px,#cddfea_1px_4px)]">
        <div className="flex flex-1 flex-col pb-[5px]">
            <div className="flex h-[29px] items-end border-b border-[#9fb3c0] bg-[repeating-linear-gradient(135deg,#c4dbe8_0_1px,#b3cedf_1px_4px)] pl-[7px]">
                <button type="button" aria-label="Model Tree" className="flex h-[26px] w-[42px] items-center justify-center rounded-t-md border border-b-0 border-[#8fa5b3] bg-linear-to-b from-white to-[#dde5ea]">
                    <svg viewBox="0 0 14 19" className="h-[19px] w-3.5" fill="#fff" stroke="#222">
                        <path d="M3 2V17M3 9.5H12" />
                        <path d="M0.5 0.5h4v4h-4zM0.5 7.5h4v4h-4zM0.5 14.5h4v4h-4zM9.5 7.5h4v4h-4z" />
                    </svg>
                </button>
            </div>
            <div className="flex flex-1 flex-col bg-linear-to-r from-white to-[#d3e2ec] pl-[7px]">
                <h2 className="flex h-[30px] items-center pl-[17px] text-xs font-bold">Model Tree</h2>
                <div className="mr-[17px] flex-1 rounded-[3px] border border-[#6f9fb8] bg-white pt-px pl-[5px] text-[11px] leading-4">
                    <div className="flex h-4 items-center gap-1"><Icon name="part" className="size-[13px]" />PRT0001.PRT</div>
                    <ul className="ml-[7px] border-l border-dotted border-[#888]">
                        {treeItems.map((item) => (
                            <li key={item.label} aria-label={item.label} className="flex h-4 items-center">
                                {item.expandable ? (
                                    <span className="-ml-[5px] flex w-4 items-center">
                                        <span className="flex size-[9px] items-center justify-center rounded-xs border border-[#9db5c9] bg-[#dfecf6]">
                                            <svg viewBox="0 0 5 5" className="size-[5px]"><path d="M0 2.5H5M2.5 0V5" stroke="#111" /></svg>
                                        </span>
                                        <span className="flex-1 border-t border-dotted border-[#888]" />
                                    </span>
                                ) : (
                                    <span className="w-[11px] border-t border-dotted border-[#888]" />
                                )}
                                <Icon name={item.icon} className="size-4" />
                            </li>
                        ))}
                    </ul>
                </div>
            </div>
        </div>
        <button type="button" aria-label="Collapse" className="mt-[247px] -ml-2 flex h-[93px] w-2 items-center justify-center rounded-l-sm border border-r-0 border-[#8d989f] bg-[#cfdfec]">
            <span className="size-[3px] rounded-full border border-[#222]" />
        </button>
    </aside>
);

const Viewport = () => (
    <div className="flex min-w-0 flex-1 bg-[linear-gradient(#c3d9eb,#8faac9_52%,#5978a9)]">
        <svg viewBox="267 210 931 480" preserveAspectRatio="xMidYMid slice" className="min-w-0 flex-1" fill="none">
            <path d="M661 277H824L868 397L752 515H588L543 396Z" fill="#c9c900" />
            <path d="M824 277L877 386L922 505L868 397Z" fill="#787800" />
            <path d="M868 397L922 505L803 625L752 515Z" fill="#8c8c00" />
            <path d="M588 515H752L803 625H641Z" fill="#505000" />
            <g stroke="#8f602c" shapeRendering="crispEdges">
                <path d="M543 397L597 507.5H922L868 394.5H576" />
                <path d="M742 275L797 385L722 625L668 517Z" />
                <path d="M633 384.5H960L887 626.5H558Z" />
            </g>
            <g stroke="#ff9600" shapeRendering="crispEdges">
                <path d="M661 277.5H824L868 397L752 515.5H588L543 396Z" />
                <path d="M824 277L877 387L922 505L868 397M922 505L803 625M752 515L803 625" />
                <path d="M588 515L641 624.5H803" />
                <path d="M543 396L597 505L601 515L641 625M597 505L715 386.5H876M715 386L661 277" />
            </g>
            <path d="M630 380.5H965L889 629.5H554Z" stroke="#fb3232" shapeRendering="crispEdges" />
            <g fill="#8ba5cb">
                <path d="M555 387h21v11h-21zM764 492h72v12h-72zM749 489h6v11h-6zM774 504h6v8h-6zM750 516h7v12h-7zM722 620h32v8h-32z" />
            </g>
            <path d="M741 505.5H779M754 494L766 518M766 491L752 526M760 491L770 505" stroke="#8f602c" />
            <g fill="#8a5428" fontSize="11" fontFamily="Lato, sans-serif">
                <text x="541" y="396">FRONT</text>
                <text x="764" y="501">PRT_CSYS_DEF</text>
                <text x="722" y="628">RIGHT</text>
                <text x="749" y="498" fontSize="9">Y</text>
                <text x="774" y="511" fontSize="9">x</text>
                <text x="750" y="526" fontSize="9">Z</text>
                <text x="961" y="385" fill="#e83838">TOP</text>
            </g>
            <path d="M733 451.5H746" stroke="#f02020" />
            <path d="M744 449h4v4h-4z" fill="#f03030" />
            <path d="M733 451L728 442" stroke="#1cf01c" />
            <circle cx="728" cy="442" r="2.5" fill="#1cf01c" />
            <path d="M733 452L729 462" stroke="#1ff0f0" />
            <circle cx="729" cy="462" r="2.5" fill="#1ff0f0" />
        </svg>
    </div>
);

const FeatureButton = ({ name, flyout }: { name: string; flyout?: string }) => (
    <button type="button" aria-label={name} className="flex h-7 items-center pl-1">
        <Icon name={name} />
        {flyout && (
            <svg viewBox="0 0 4 6" className={`ml-2 h-1.5 w-1 ${flyout}`}><path d="M0 0V6L4 3Z" fill="currentColor" /></svg>
        )}
    </button>
);

const FeatureBar = () => (
    <nav aria-label="Features" className="flex w-[82px] shrink-0 bg-[#dceaf3]">
        <div className="flex flex-1 flex-col">
            <RowGrip />
            {['sketch', 'plane', 'axis', 'curve'].map((n) => <FeatureButton key={n} name={n} />)}
            <FeatureButton name="points" flyout="text-[#333]" />
            {['csys', 'analysisFeature', 'chain'].map((n) => <FeatureButton key={n} name={n} />)}
            <RowGrip />
            {['note', 'symbol', 'notes'].map((n) => <FeatureButton key={n} name={n} />)}
        </div>
        <div className="flex flex-1 flex-col">
            <RowGrip />
            {['hole', 'shell'].map((n) => <FeatureButton key={n} name={n} />)}
            <FeatureButton name="rib" flyout="text-[#b3bbc0]" />
            {['draft', 'round', 'chamfer'].map((n) => <FeatureButton key={n} name={n} />)}
            <RowGrip />
            {['extrude', 'revolve', 'sweep', 'boundary', 'style'].map((n) => <FeatureButton key={n} name={n} />)}
            <RowGrip />
            {['mirror', 'merge', 'trim'].map((n) => <FeatureButton key={n} name={n} />)}
        </div>
    </nav>
);

export default function App() {
    return (
        <div className="flex min-h-screen flex-col overflow-hidden bg-[#dceaf3] font-['Liberation_Sans',Arial,sans-serif] text-xs text-[#252f37]">
            <TitleBar />
            <nav aria-label="Main menu" className="flex h-[29px] items-center gap-[15px] border-b border-[#b4cbdb] bg-linear-to-b from-[#f6fbfe] to-[#e3edf4] pt-1 pl-[7px]">
                {menus.map((m) => <button key={m} type="button" className="whitespace-nowrap">{m}</button>)}
            </nav>
            <Toolbars />
            <Dashboard />
            <main className="flex flex-1">
                <ModelTree />
                <Viewport />
                <FeatureBar />
            </main>
        </div>
    );
}
